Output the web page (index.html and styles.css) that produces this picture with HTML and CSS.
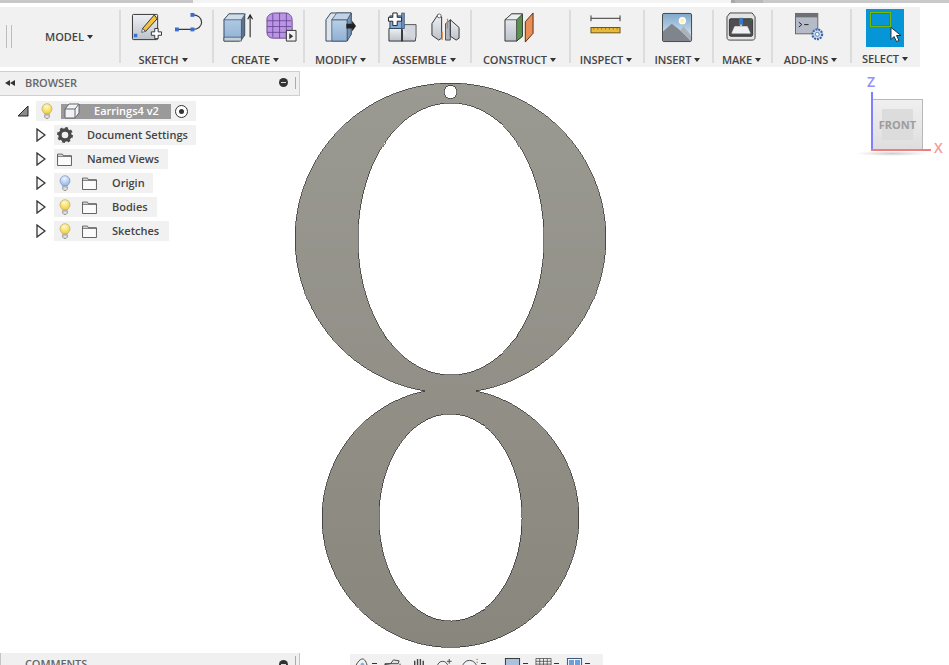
FILE: index.html
```html
<!DOCTYPE html>
<html lang="en">
<head>
<meta charset="utf-8">
<title>Earrings4 v2</title>
<link rel="stylesheet" href="styles.css">
</head>
<body>
<svg width="0" height="0" class="defs">
  <defs>
    <linearGradient id="blueFace" x1="0" y1="0" x2="0" y2="1"><stop offset="0" stop-color="#b9d0e8"/><stop offset="1" stop-color="#8fb0d4"/></linearGradient>
    <linearGradient id="greyFace" x1="0" y1="0" x2="0" y2="1"><stop offset="0" stop-color="#eef0f3"/><stop offset="1" stop-color="#bcc2cb"/></linearGradient>
    <linearGradient id="shapeFill" gradientUnits="userSpaceOnUse" x1="0" y1="83" x2="0" y2="647"><stop offset="0" stop-color="#9b9a92"/><stop offset="1" stop-color="#89867d"/></linearGradient>
    <linearGradient id="skyFill" x1="0" y1="0" x2="0" y2="1"><stop offset="0" stop-color="#7fa9cc"/><stop offset="1" stop-color="#e4eef3"/></linearGradient>
    <radialGradient id="bulbOn" cx=".45" cy=".3" r=".7"><stop offset="0" stop-color="#fffbc8"/><stop offset="1" stop-color="#f5cf38"/></radialGradient>
    <radialGradient id="bulbBlue" cx=".45" cy=".3" r=".7"><stop offset="0" stop-color="#eef5ff"/><stop offset="1" stop-color="#8fb4ec"/></radialGradient>
    <symbol id="bulb-on" viewBox="0 0 12 16"><path d="M6 .7a5 5 0 0 0-5 5c0 2.200 1.600 3.200 2.300 5h5.400c.7-1.800 2.300-2.800 2.300-5a5 5 0 0 0-5-5z" fill="url(#bulbOn)" stroke="#a89f5c" stroke-width=".6"/><path d="M3.700 11.800h4.600v2.300l-1.200 1.300H4.900L3.700 14.100z" fill="#e2e2e2" stroke="#777" stroke-width=".7"/></symbol>
    <symbol id="bulb-blue" viewBox="0 0 12 16"><path d="M6 .7a5 5 0 0 0-5 5c0 2.200 1.600 3.200 2.300 5h5.400c.7-1.800 2.300-2.800 2.300-5a5 5 0 0 0-5-5z" fill="url(#bulbBlue)" stroke="#7188b0" stroke-width=".6"/><path d="M3.700 11.800h4.600v2.300l-1.200 1.300H4.900L3.700 14.100z" fill="#e2e2e2" stroke="#777" stroke-width=".7"/></symbol>
    <symbol id="folder" viewBox="0 0 16 14"><path d="M.5 13.500V1.200h5.300l1 1.800h8.700v10.500z" fill="#fbfbfb" stroke="#555"/><path d="M.5 3.500h15" stroke="#555" fill="none"/></symbol>
    <symbol id="expander" viewBox="0 0 10 14"><path d="M1 1l8 6-8 6z" fill="#f6f6f6" stroke="#333" stroke-width="1.300"/></symbol>
  </defs>
</svg>
<div class="app">
  <div class="strip">
    <span class="strip-a"></span><span class="strip-b"></span><span class="strip-c"></span><span class="strip-d"></span><span class="strip-e"></span>
  </div>

  <div class="toolbar">
    <div class="group group-model">
      <span class="grip"></span>
      <span class="model-label">MODEL<i class="caret"></i></span>
    </div>

    <div class="group group-sketch">
      <div class="icons icons-wide gap-13">
        <svg class="icon" viewBox="0 0 32 32"><rect x="1.500" y="2.500" width="26" height="26" rx="1" fill="url(#greyFace)" stroke="#333"/><path d="M12 17l3 3 12-13-3-4z" fill="#f3c33c" stroke="#333"/><path d="M12 17l-1 4 4-1z" fill="#fff" stroke="#333" stroke-width=".7"/><rect x="3" y="22.500" width="3.500" height="3.500" fill="#3a6fd0"/><path d="M21 20.500h3.500v-3.500h3.500v3.500h3.500v3.500h-3.500v3.500h-3.500v-3.500H21z" fill="#fff" stroke="#333"/></svg>
        <svg class="icon" viewBox="0 0 32 32"><path d="M3 18h16.500c5 0 9-3 9-7.500S24.500 3 19.500 3" fill="none" stroke="#3a3a3a" stroke-width="1.200"/><rect x="1" y="16" width="4" height="4" fill="#3a6fd0"/><rect x="17" y="16" width="4" height="4" fill="#3a6fd0"/><rect x="17" y="1" width="4" height="4" fill="#3a6fd0"/></svg>
      </div>
      <span class="label">SKETCH<i class="caret"></i></span>
    </div>

    <div class="group group-create">
      <div class="icons icons-wide gap-13">
        <svg class="icon" viewBox="0 0 32 32"><path d="M1 8l5-6h16v22l-5 6H1z" fill="url(#blueFace)" stroke="#34465c"/><path d="M1 8h18l4-6H6z" fill="#cfdde9" stroke="#34465c" stroke-width=".7"/><path d="M19 8v21l3.500-5V2" fill="#5e7389" stroke="#34465c" stroke-width=".7"/><path d="M1 26h18v4H1z" fill="#c7cfd7" stroke="#34465c" stroke-width=".7"/><path d="M28 26V4m-2.500 3.500L28 3l2.500 4.500" fill="none" stroke="#222" stroke-width="1.100"/></svg>
        <svg class="icon" viewBox="0 0 32 32"><path d="M1 7c0-3 4-6 8-6h11c5 0 7 4 7 8v13c0 3-2 5-5 5H7c-3 0-6-2-6-6z" fill="#bb95e4" stroke="#6a4a96"/><path d="M1 9h25M1 15h25M1 21h25M7 2v24M14 1v26M21 1v26" stroke="#5f3f8d" stroke-width=".8" fill="none"/><path d="M21 19h10v11H21z" fill="#f2f2f2" stroke="#333"/><path d="M24 22l4 3-4 3z" fill="#333"/></svg>
      </div>
      <span class="label">CREATE<i class="caret"></i></span>
    </div>

    <div class="group group-modify">
      <div class="icons">
        <svg class="icon" viewBox="0 0 32 32"><path d="M1 8L6 1h21v22l-5 7H1z" fill="#dde4ec" stroke="#34465c"/><path d="M7 8h16v22H7z" fill="url(#blueFace)" stroke="#34465c" stroke-width=".7"/><path d="M23 8l4-7v22l-4 7z" fill="#7693b4" stroke="#34465c" stroke-width=".7"/><path d="M7 8l5-7h15l-4 7z" fill="#c0d2e4" stroke="#34465c" stroke-width=".7"/><path d="M22 12h6v-3l4 5.500-4 5.500v-3h-6z" fill="#222"/></svg>
      </div>
      <span class="label">MODIFY<i class="caret"></i></span>
    </div>

    <div class="group group-assemble">
      <div class="icons gap-13">
        <svg class="icon" viewBox="0 0 32 32"><path d="M2 17h14v13H2zM15 17h14v13H15z" fill="url(#greyFace)" stroke="#333"/><path d="M15 17l3-4h12v12l-1 5" fill="#d2d7dd" stroke="#333" stroke-width=".8"/><path d="M3 4h14v13H3z" fill="#88aed8" stroke="#2f4766"/><path d="M15 1h3v16h-3z" fill="#6d90b8" stroke="#2f4766" stroke-width=".6"/><path d="M6 1h4.500v4.500H15v4h-4.500V14H6V9.500H1.500v-4H6z" fill="#fff" stroke="#222"/></svg>
        <svg class="icon" viewBox="0 0 32 32"><path d="M2 12l6-9 4 2v22l-3 2-7-5z" fill="url(#greyFace)" stroke="#333"/><circle cx="9.500" cy="4" r="2" fill="#fff" stroke="#333" stroke-width=".7"/><path d="M16 12l5-4v21h-5z" fill="#aeb5bf" stroke="#333" stroke-width=".8"/><path d="M21 8l9 8v11l-3 2-6-4z" fill="url(#greyFace)" stroke="#333"/><path d="M12.500 20v9M18 7v10" stroke="#e8762c" stroke-width="1.200"/></svg>
      </div>
      <span class="label">ASSEMBLE<i class="caret"></i></span>
    </div>

    <div class="group group-construct">
      <div class="icons">
        <svg class="icon" viewBox="0 0 32 32"><path d="M1 8l7-6h11v23l-6 5H1z" fill="url(#greyFace)" stroke="#333"/><path d="M13 8l6-6v23l-6 5z" fill="#5e9151" stroke="#2a3d28" stroke-width=".8"/><path d="M1 8h12l6-6H8z" fill="#eceff2" stroke="#333" stroke-width=".7"/><path d="M22 10l8-9v21l-8 9z" fill="#e88f57" stroke="#5c2a12"/></svg>
      </div>
      <span class="label">CONSTRUCT<i class="caret"></i></span>
    </div>

    <div class="group group-inspect">
      <div class="icons">
        <svg class="icon" viewBox="0 0 32 32"><path d="M1 6.500h30M1 3.500v6M31 3.500v6" fill="none" stroke="#333"/><rect x="1" y="16" width="30" height="5.500" fill="#e8b93a" stroke="#6b5414"/><path d="M4 16v2M8 16v2M12 16v2M16 16v2M20 16v2M24 16v2M28 16v2" stroke="#6b5414" stroke-width=".7"/></svg>
      </div>
      <span class="label">INSPECT<i class="caret"></i></span>
    </div>

    <div class="group group-insert">
      <div class="icons">
        <svg class="icon" viewBox="0 0 32 32"><rect x=".5" y="1.500" width="30" height="29" rx="1.500" fill="url(#skyFill)" stroke="#444"/><circle cx="21" cy="9" r="3" fill="#fff2b0" stroke="#fff" stroke-width="1.500"/><path d="M1 30V20l9-8 9 7 11 11z" fill="#7f848d"/><path d="M19 19l3-4 8 9v6z" fill="#aab1b8"/></svg>
      </div>
      <span class="label">INSERT<i class="caret"></i></span>
    </div>

    <div class="group group-make">
      <div class="icons">
        <svg class="icon" viewBox="0 0 32 32"><path d="M1 5l3-4h23l3 4v21c0 2-1 3-3 3H4c-2 0-3-1-3-3z" fill="#e4e4e4" stroke="#444"/><rect x="3.500" y="7" width="24" height="18" rx="1.500" fill="#4d4f53" stroke="#333"/><path d="M6 22l3-7h13l3 7z" fill="#eef0f2" stroke="#fff" stroke-width=".5"/><rect x="13.500" y="6" width="4" height="7" fill="#3a78c8"/><path d="M14 13h3l-1.500 3z" fill="#ccc"/><rect x="25" y="7" width="2" height="2" fill="#0c8a1e"/></svg>
      </div>
      <span class="label">MAKE<i class="caret"></i></span>
    </div>

    <div class="group group-addins">
      <div class="icons">
        <svg class="icon" viewBox="0 0 32 32"><rect x=".5" y="1.500" width="23" height="21" fill="#b6bbc8" stroke="#666"/><rect x=".5" y="1.500" width="23" height="4" fill="#6e7078"/><path d="M4 10.500l3 2.500-3 2.500M9.500 13H14" fill="none" stroke="#222"/><circle cx="23" cy="23" r="5" fill="#cfdcf0" stroke="#3a64a8" stroke-width="2.200" stroke-dasharray="2 1"/><circle cx="23" cy="23" r="2" fill="#fff" stroke="#3a64a8" stroke-width=".8"/></svg>
      </div>
      <span class="label">ADD-INS<i class="caret"></i></span>
    </div>

    <div class="group group-select">
      <div class="select-icon">
        <span class="select-rect"></span>
        <svg class="cursor" viewBox="0 0 12 16"><path d="M1 1v12l3-3 2.500 5 2.500-1-2.500-5H11z" fill="#fff" stroke="#222" stroke-width=".9"/></svg>
      </div>
      <span class="label">SELECT<i class="caret"></i></span>
    </div>
  </div>

  <div class="workspace">
    <svg class="canvas" viewBox="0 71 949 594" width="949" height="594">
      <path class="shape" fill-rule="evenodd" d="M425 391A155.500 155 0 1 1 476 391A128.500 129.500 0 1 1 425 391ZM451 103C399 103 358 163 358 239S399 375 451 375S544 315 544 239S503 103 451 103ZM450.500 414C411 414 379 460 379 517.500S411 621 450.500 621S522 575 522 517.500S490 414 450.500 414ZM450.500 85.500a6.500 6.500 0 1 0 .01 0Z"/>
    </svg>

    <aside class="sidebar">
      <div class="browser">
        <div class="panel-head">
          <span class="collapse"><i></i><i></i></span>
          <span class="panel-title">BROWSER</span>
          <span class="minus"></span>
          <span class="handle"></span>
        </div>
        <ul class="tree">
          <li class="row row-root">
            <svg class="disclosure" viewBox="0 0 12 12"><path d="M11 1v10H1z" fill="#8c8c8c" stroke="#222"/></svg>
            <div class="pill pill-root">
              <svg class="bulb"><use href="#bulb-on"/></svg>
              <span class="component">
                <svg class="box" viewBox="0 0 16 16"><path d="M1 6l4-5h10v9l-4 5H2q-1 0-1-1z" fill="#f0f2f5" stroke="#666"/><path d="M11 15V6H1M11 6l4-5" fill="none" stroke="#666"/></svg>
                <span class="component-name">Earrings4 v2</span>
              </span>
              <span class="radio"></span>
            </div>
          </li>
          <li class="row">
            <svg class="expander"><use href="#expander"/></svg>
            <div class="pill pill-doc">
              <svg class="gear" viewBox="0 0 16 16"><circle cx="8" cy="8" r="5" fill="none" stroke="#4a4a4a" stroke-width="3.400"/><circle cx="8" cy="8" r="7" fill="none" stroke="#4a4a4a" stroke-width="2" stroke-dasharray="2.800 2.700"/></svg>
              <span class="text">Document Settings</span>
            </div>
          </li>
          <li class="row">
            <svg class="expander"><use href="#expander"/></svg>
            <div class="pill pill-views">
              <svg class="folder folder-first"><use href="#folder"/></svg>
              <span class="text">Named Views</span>
            </div>
          </li>
          <li class="row">
            <svg class="expander"><use href="#expander"/></svg>
            <div class="pill pill-origin">
              <svg class="bulb"><use href="#bulb-blue"/></svg>
              <svg class="folder"><use href="#folder"/></svg>
              <span class="text">Origin</span>
            </div>
          </li>
          <li class="row">
            <svg class="expander"><use href="#expander"/></svg>
            <div class="pill pill-bodies">
              <svg class="bulb"><use href="#bulb-on"/></svg>
              <svg class="folder"><use href="#folder"/></svg>
              <span class="text">Bodies</span>
            </div>
          </li>
          <li class="row">
            <svg class="expander"><use href="#expander"/></svg>
            <div class="pill pill-sketches">
              <svg class="bulb"><use href="#bulb-on"/></svg>
              <svg class="folder"><use href="#folder"/></svg>
              <span class="text">Sketches</span>
            </div>
          </li>
        </ul>
      </div>
      <div class="comments">
        <span class="panel-title">COMMENTS</span>
        <span class="minus"></span>
        <span class="handle"></span>
      </div>
    </aside>

    <div class="viewcube">
      <span class="axis-z-label">Z</span>
      <span class="cube"><span class="cube-face">FRONT</span></span>
      <span class="axis-z"></span>
      <span class="axis-x"></span>
      <span class="axis-x-label">X</span>
      <span class="cube-shadow"></span>
    </div>

    <div class="navbar">
      <svg class="nav-icon nav-tight" viewBox="0 0 18 18"><path d="M1 14C3 6 7 1 10 1s5 5 6 12M5 9l4 3 5-4" fill="none" stroke="#444"/><circle cx="10" cy="7" r="2" fill="#7fb0e0"/></svg><i class="nav-caret"></i>
      <svg class="nav-icon" viewBox="0 0 18 18"><path d="M1 7l6-1 3-4 6 1-1 3H1v8h16V6" fill="#e4e4e4" stroke="#444"/></svg>
      <svg class="nav-icon" viewBox="0 0 18 18"><path d="M5 11V3M8 10V1M11 10V1M14 11V3" fill="none" stroke="#444" stroke-width="1.500"/></svg>
      <svg class="nav-icon" viewBox="0 0 18 18"><circle cx="7" cy="9" r="5.500" fill="none" stroke="#444"/><path d="M14 1v5M11.500 3.500h5M11.500 8h5" stroke="#444"/></svg>
      <svg class="nav-icon nav-tight" viewBox="0 0 18 18"><circle cx="8" cy="10" r="7.500" fill="#eef2f4" stroke="#444"/><path d="M16 1v1M16 4v1" stroke="#444"/></svg><i class="nav-caret"></i>
      <svg class="nav-icon nav-tight nav-gap" viewBox="0 0 18 18"><rect x="1.500" y=".5" width="15" height="14" fill="#a9c3de" stroke="#333"/></svg><i class="nav-caret"></i>
      <svg class="nav-icon nav-tight" viewBox="0 0 18 18"><path d="M1 .5h16v12H1zM1 3.500h16M1 6.500h16M5 .5v9M9 .5v9M13 .5v9" fill="none" stroke="#444" stroke-width=".8"/></svg><i class="nav-caret"></i>
      <svg class="nav-icon nav-tight" viewBox="0 0 18 18"><rect x="1.500" y=".5" width="15" height="14" fill="#fff" stroke="#33507a"/><rect x="3" y="2" width="5.500" height="6" fill="#6f9fd4"/><rect x="9.500" y="2" width="5.500" height="6" fill="#6f9fd4"/></svg><i class="nav-caret"></i>
    </div>
  </div>
</div>
</body>
</html>
```

FILE: styles.css
```css
* { box-sizing: border-box; }
html, body { margin: 0; padding: 0; background: #fff; }
.defs { position: absolute; }
.app {
  width: 949px; height: 665px; overflow: hidden;
  display: flex; flex-direction: column;
  font-family: "Open Sans", "Noto Sans", sans-serif;
  color: #444;
}
.strip { display: flex; height: 3px; flex: none; }
.strip-a { width: 193px; background: #c8c8c8; }
.strip-b { width: 538px; background: #f4f4f4; }
.strip-c { width: 4px; background: #a8a8a8; }
.strip-d { width: 28px; background: #b9b9b9; }
.strip-e { flex: 1; background: #c9c9c9; }

.toolbar {
  display: flex; flex: none;
  width: 920px; height: 60px; margin-top: 4px; padding: 3px 0 4px;
  background: #f1f1f1;
}
.group {
  display: flex; flex-direction: column; align-items: center; justify-content: space-between;
  border-left: 2px solid #dcdcdc; padding-top: 2px;
}
.group-model { width: 119px; border-left: 0; flex-direction: row; justify-content: flex-start; align-items: center; padding: 0; }
.group-sketch { width: 93px; }
.group-create { width: 91px; }
.group-modify { width: 75px; }
.group-assemble { width: 92px; }
.group-construct { width: 99px; }
.group-inspect { width: 74px; }
.group-insert { width: 69px; }
.group-make { width: 59px; }
.group-addins { width: 79px; }
.group-select { width: 70px; padding-top: 0; margin-top: -1px; align-items: flex-start; }
.grip { width: 6px; height: 23px; margin-left: 6px; border-left: 1px solid #bdbdbd; border-right: 1px solid #bdbdbd; }
.model-label { margin-left: 33px; font-size: 11px; font-weight: 600; }
.icons { display: flex; align-items: flex-start; height: 32px; padding-right: 3px; }
.icons-wide { padding-right: 0; padding-left: 3px; }
.gap-13 { gap: 12px; }
.icon { width: 31px; height: 31px; display: block; }
.label { display: block; font-size: 11px; line-height: 14px; font-weight: 600; white-space: nowrap; letter-spacing: -.1px; margin: 0 2px -4px 0; }
.group-sketch .label, .group-create .label { margin-right: 7px; }
.group-select .label { margin: 0 0 -3px 10px; }
.caret {
  display: inline-block; width: 0; height: 0; margin-left: 3px; vertical-align: 2px;
  border-left: 3px solid transparent; border-right: 3px solid transparent; border-top: 4px solid #333;
}
.select-icon { position: relative; width: 38px; height: 38px; margin-left: 14px; background: #0696d7; flex: none; }
.select-rect { position: absolute; left: 4px; top: 3px; width: 21px; height: 15px; border: 1px solid #7ab800; box-shadow: inset 0 0 0 1px #3f8a22; }
.cursor { position: absolute; left: 24px; top: 17px; width: 12px; height: 17px; }

.workspace { position: relative; flex: 1; min-height: 0; margin-top: 4px; display: flex; }
.canvas { position: absolute; left: 0; top: 0; }
.shape { fill: url(#shapeFill); stroke: #161616; stroke-width: .6; shape-rendering: crispEdges; }

.sidebar { position: relative; width: 300px; display: flex; flex-direction: column; justify-content: space-between; }
.panel-head {
  display: flex; align-items: center; height: 25px; padding: 0 3px 2px 5px;
  background: #f0f0f0; border: 1px solid #cfcfcf; border-left: 0;
}
.collapse { display: flex; width: 10px; }
.collapse i { width: 0; height: 0; border-top: 3.500px solid transparent; border-bottom: 3.500px solid transparent; border-right: 5px solid #333; }
.panel-title { margin-left: 10px; font-size: 11px; font-weight: 600; color: #666; letter-spacing: -.1px; }
.minus { margin-left: auto; width: 9px; height: 9px; border-radius: 50%; background: #333; position: relative; }
.minus::after { content: ""; position: absolute; left: 2px; right: 2px; top: 4px; height: 1px; background: #ddd; }
.handle { width: 1px; height: 12px; margin-left: 7px; background: #aaa; }

.tree { list-style: none; margin: 5px 0 0; padding: 0; }
.row { display: flex; align-items: center; height: 20px; margin-bottom: 4px; padding-left: 36px; position: relative; }
.row-root { padding-left: 17px; }
.disclosure { width: 12px; height: 12px; flex: none; margin-right: 7px; }
.expander { width: 10px; height: 14px; flex: none; margin-right: 8px; }
.pill { display: flex; align-items: center; height: 20px; background: #f1f1f1; flex: none; }
.pill-root { width: 160px; padding-left: 5px; }
.pill-doc { width: 142px; padding-left: 3px; }
.pill-views { width: 114px; padding-left: 3px; }
.pill-origin { width: 99px; padding-left: 5px; }
.pill-bodies { width: 103px; padding-left: 5px; }
.pill-sketches { width: 115px; padding-left: 5px; }
.bulb { width: 12px; height: 16px; flex: none; }
.component { display: flex; align-items: center; margin-left: 8px; width: 110px; height: 15px; background: #9a9a9a; flex: none; padding-left: 3px; }
.box { width: 16px; height: 16px; flex: none; }
.component-name { margin-left: 14px; padding-bottom: 1px; color: #fff; font-size: 11px; font-weight: 600; white-space: nowrap; }
.radio { position: relative; width: 13px; height: 13px; margin-left: 4px; border: 1px solid #333; border-radius: 50%; background: #fff; flex: none; }
.radio::after { content: ""; position: absolute; left: 3px; top: 3px; width: 5px; height: 5px; border-radius: 50%; background: #333; }
.gear { width: 16px; height: 16px; flex: none; margin-right: 14px; }
.folder { width: 15px; height: 13px; flex: none; margin-left: 11px; margin-right: 15px; }
.folder-first { margin-left: 0; margin-right: 15px; }
.text { padding-bottom: 2px; font-size: 11px; font-weight: 600; color: #444; white-space: nowrap; }

.comments {
  display: flex; align-items: flex-start; height: 12px; padding: 3px 3px 0 0; overflow: hidden;
  background: #f0f0f0; border-right: 1px solid #c4c4c4; border-left: 1px solid #c4c4c4;
}
.comments .panel-title { margin-left: 24px; line-height: 15px; }
.comments .minus { margin-top: 4px; }
.comments .handle { margin-top: 0; }

.viewcube { position: absolute; left: 866px; top: 4px; width: 78px; height: 88px; font-family: "Open Sans", sans-serif; }
.axis-z-label { position: absolute; left: 1px; top: -1px; font-size: 14px; line-height: 16px; font-weight: 600; color: #8f8fff; }
.axis-x-label { position: absolute; left: 68px; top: 65px; font-size: 14px; line-height: 16px; font-weight: 600; color: #f59a9a; }
.axis-z { position: absolute; left: 5px; top: 17px; width: 2px; height: 59px; background: #8080ff; }
.axis-x { position: absolute; left: 5px; top: 74px; width: 60px; height: 2px; background: #ef7f7f; }
.cube { position: absolute; left: 6px; top: 24px; width: 51px; height: 51px; background: linear-gradient(#f0f0f0, #dedede); border: 1px solid #b8b8b8; }
.cube-face { position: absolute; left: 9px; top: 9px; width: 31px; height: 31px; background: #dcdcdc; color: #9c9c9c; font-size: 11px; line-height: 31px; font-weight: 700; text-align: center; white-space: nowrap; display: flex; align-items: center; justify-content: center; }
.cube-shadow { position: absolute; left: -10px; top: 76px; width: 72px; height: 5px; background: radial-gradient(closest-side, rgba(0,0,0,.2), rgba(0,0,0,0)); }

.navbar {
  position: absolute; left: 350px; bottom: 0; width: 253px; height: 11px; overflow: hidden;
  background: #f1f1f1; display: flex; align-items: flex-start; padding-left: 3px;
}
.nav-icon { width: 17px; height: 17px; flex: none; margin-right: 9px; margin-top: 4px; }
.nav-tight { margin-right: 2px; }
.nav-gap { margin-left: 11px; }
.nav-caret { flex: none; width: 5px; height: 1px; background: #333; margin: 9px 7px 0 0; }
```
